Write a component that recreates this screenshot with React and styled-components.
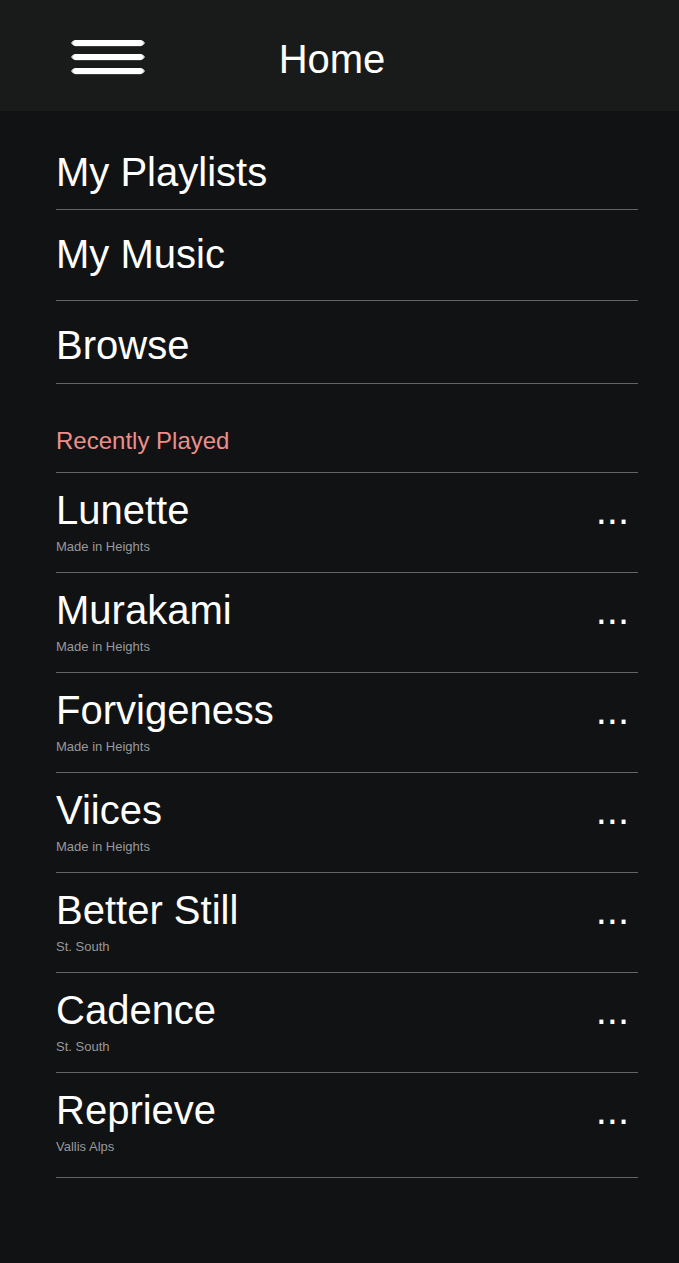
import React from 'react';
import styled, { createGlobalStyle } from 'styled-components';

const GlobalStyle = createGlobalStyle`
  *, *::before, *::after { box-sizing: border-box; }
  body { margin: 0; background: #111214; color: #fff; font-family: "Liberation Sans", Arial, sans-serif; }
  h1, h2, p, ul { margin: 0; padding: 0; font-weight: 400; }
  ul { list-style: none; }
`;

const Page = styled.div`
  min-height: 100vh;
  background: #111214;
`;

const Header = styled.header`
  display: grid;
  grid-template-columns: 1fr auto 1fr;
  align-items: center;
  height: 111px;
  padding: 4px 55px 0 40px;
  background: #191b1a;
`;

const MenuButton = styled.button`
  display: flex;
  justify-self: start;
  padding: 0;
  margin-left: 30px;
  border: 0;
  background: none;
  cursor: pointer;
`;

const Title = styled.h1`
  padding-top: 2px;
  font-size: 40px;
  line-height: 48px;
`;

const Content = styled.main`
  padding: 36px 41px 80px 56px;
`;

const NavLink = styled.a`
  display: block;
  height: ${(p) => p.$height}px;
  padding-top: ${(p) => p.$top}px;
  border-bottom: 1px solid #636466;
  color: #fff;
  font-size: 40px;
  line-height: 48px;
  text-decoration: none;
`;

const SectionTitle = styled.h2`
  padding: 42px 0 16px;
  border-bottom: 1px solid #636466;
  color: #ed8e8b;
  font-size: 24px;
  line-height: 30px;
`;

const Track = styled.li`
  display: flex;
  justify-content: space-between;
  height: 100px;
  padding-top: 13px;
  border-bottom: 1px solid #636466;

  &:last-child { height: 105px; }
`;

const TrackName = styled.p`
  font-size: 40px;
  line-height: 48px;
`;

const Artist = styled.p`
  color: #98999a;
  font-size: 13px;
  line-height: 16px;
  padding-top: 5px;
`;

const MoreButton = styled.button`
  align-self: flex-start;
  padding: 0 9px 0 0;
  border: 0;
  background: none;
  color: #fff;
  font: 40px/48px "Liberation Sans", Arial, sans-serif;
  cursor: pointer;
`;

const links = [
  { label: 'My Playlists', height: 63, top: 1 },
  { label: 'My Music', height: 91, top: 20 },
  { label: 'Browse', height: 83, top: 20 },
];

const tracks = [
  ['Lunette', 'Made in Heights'],
  ['Murakami', 'Made in Heights'],
  ['Forvigeness', 'Made in Heights'],
  ['Viices', 'Made in Heights'],
  ['Better Still', 'St. South'],
  ['Cadence', 'St. South'],
  ['Reprieve', 'Vallis Alps'],
];

function MenuIcon() {
  return (
    <svg width="76" height="36" viewBox="0 0 76 36" fill="#fff" aria-hidden="true">
      {[0, 14, 28].map((y) => (
        <g key={y} transform={`translate(0 ${y})`}>
          <rect x="1" y="2" width="74" height="2" opacity="0.5" />
          <rect x="2" y="1" width="72" height="4" opacity="0.6" />
          <rect x="3" y="0" width="70" height="6" rx="2" />
          <rect x="5" y="6" width="66" height="1" opacity="0.15" />
        </g>
      ))}
    </svg>
  );
}

export default function App() {
  return (
    <Page>
      <GlobalStyle />
      <Header>
        <MenuButton type="button" aria-label="Open menu"><MenuIcon /></MenuButton>
        <Title>Home</Title>
      </Header>
      <Content>
        <nav>
          {links.map((l) => (
            <NavLink key={l.label} href="#" $height={l.height} $top={l.top}>{l.label}</NavLink>
          ))}
        </nav>
        <SectionTitle>Recently Played</SectionTitle>
        <ul>
          {tracks.map(([name, artist]) => (
            <Track key={name}>
              <div>
                <TrackName>{name}</TrackName>
                <Artist>{artist}</Artist>
              </div>
              <MoreButton type="button" aria-label={`More options for ${name}`}>...</MoreButton>
            </Track>
          ))}
        </ul>
      </Content>
    </Page>
  );
}
